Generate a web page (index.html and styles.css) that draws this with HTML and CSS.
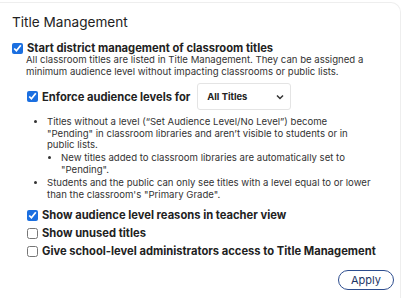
FILE: index.html
```html
<!DOCTYPE html>
<html lang="en">
<head>
    <meta charset="UTF-8">
    <title>Title Management</title>
    <link rel="stylesheet" href="styles.css">
</head>
<body>

    <!-- Title Management card -->
    <div class="card">
        <h2 class="card-title">Title Management</h2>

        <label class="option main">
            <input type="checkbox" checked>
            <span>Start district management of classroom titles</span>
        </label>
        <p class="help">All classroom titles are listed in Title Management. They can be assigned a minimum audience level without impacting classrooms or public lists.</p>

        <div class="sub">
            <div class="enforce">
                <label class="option">
                    <input type="checkbox" checked>
                    <span>Enforce audience levels for</span>
                </label>
                <div class="select">
                    <span>All Titles</span>
                    <svg width="8" height="6" viewBox="0 0 8 6"><path d="M1 1.5 L4 4.5 L7 1.5" fill="none" stroke="#333" stroke-width="1.5"/></svg>
                </div>
            </div>

            <ul class="notes">
                <li>Titles without a level (“Set Audience Level/No Level”) become<br>"Pending" in classroom libraries and aren’t visible to students or in public lists.
                    <ul>
                        <li>New titles added to classroom libraries are automatically set to "Pending".</li>
                    </ul>
                </li>
                <li>Students and the public can only see titles with a level equal to or lower than the classroom's "Primary Grade".</li>
            </ul>

            <label class="option row">
                <input type="checkbox" checked>
                <span>Show audience level reasons in teacher view</span>
            </label>
            <label class="option row">
                <input type="checkbox">
                <span>Show unused titles</span>
            </label>
            <label class="option row">
                <input type="checkbox">
                <span>Give school-level administrators access to Title Management</span>
            </label>
        </div>

        <div class="actions">
            <button class="apply">Apply</button>
        </div>
    </div>

</body>
</html>
```

FILE: styles.css
```css
body {
    margin: 0;
    font-family: Inter, "Noto Sans", sans-serif;
    background-color: white;
    color: #222;
}

/* Card */
.card {
    margin: 2px 5px 0 -12px;
    padding: 9px 6px 0 23px;
    border: 1px solid #eeeeee;
    border-bottom: none;
    border-radius: 10px 10px 0 0;
    height: 286px;
}

.card-title {
    margin: 0 0 9px 0;
    font-size: 13.6px;
    font-weight: 400;
    line-height: 20px;
}

/* Checkbox rows */
.option {
    display: flex;
    align-items: center;
    gap: 4px;
    height: 14px;
    font-size: 11.2px;
    font-weight: 700;
    line-height: 12px;
    white-space: nowrap;
}

.option.main {
    height: 12px;
    margin-top: 10px;
}

.option.row {
    height: 18px;
}

.option input {
    margin: 0;
    width: 11px;
    height: 11px;
    accent-color: #1b6fe0;
}

.card-title + .option.main {
    margin-top: 10px;
}

.help {
    margin: 0 0 0 14px;
    max-width: 350px;
    font-size: 9.6px;
    line-height: 11.5px;
    color: #333;
}

/* Indented block */
.sub {
    margin-left: 15px;
}

.enforce {
    display: flex;
    align-items: center;
    gap: 7px;
    margin-top: 6px;
}

.select {
    display: flex;
    align-items: center;
    justify-content: space-between;
    width: 77px;
    height: 25px;
    padding: 0 6px 0 9px;
    border: 1px solid #e4e4e4;
    border-radius: 3px;
    font-size: 9.4px;
    font-weight: 700;
}

.notes {
    width: 327px;
    margin: 6px 0 6px 0;
    padding-left: 20px;
    font-size: 9.6px;
    line-height: 11.5px;
    color: #333;
}

.notes > li + li {
    margin-top: 2px;
}

.notes ul {
    margin: 1.5px 0 0 0;
    padding-left: 14px;
    list-style: disc;
}

/* Apply */
.actions {
    display: flex;
    justify-content: flex-end;
    margin-top: 10px;
}

.apply {
    width: 56px;
    height: 20px;
    border: 1px solid #2d4d8f;
    border-radius: 10px;
    background: white;
    color: #1d3566;
    font-family: inherit;
    font-size: 11px;
}
```
